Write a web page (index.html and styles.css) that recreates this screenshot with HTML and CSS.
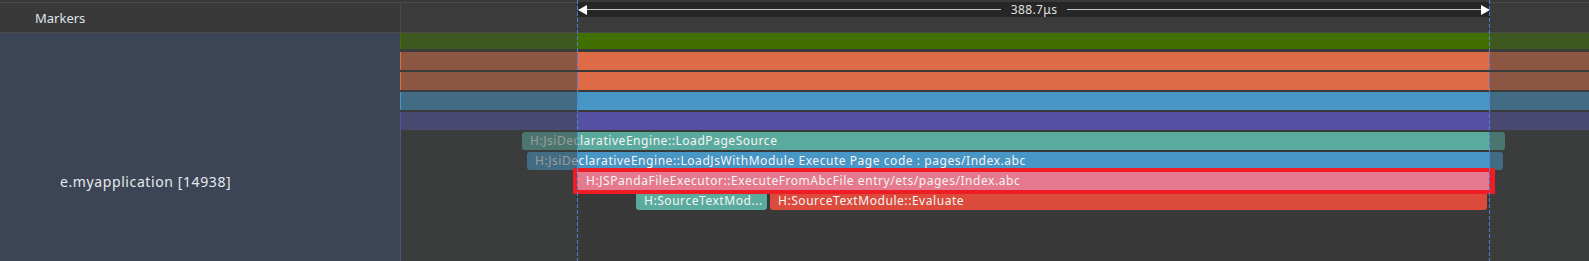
FILE: index.html
```html
<!DOCTYPE html>
<html lang="en">
<head>
  <meta charset="UTF-8">
  <title>Trace - e.myapplication</title>
  <link rel="stylesheet" href="styles.css">
</head>
<body>

  <div class="trace">

    <!-- Left column: row names -->
    <div class="side">
      <div class="side-head"><span>Markers</span></div>
      <div class="side-body"><span>e.myapplication [14938]</span></div>
    </div>

    <!-- Right column: timeline -->
    <div class="timeline">
      <div class="time-head">
        <div class="ruler" style="left: 177px; width: 912px;">
          <span class="arrow arrow-left"></span>
          <span class="rule-line"></span>
          <span class="rule-label">388.7μs</span>
          <span class="rule-line"></span>
          <span class="arrow arrow-right"></span>
        </div>
      </div>

      <div class="tracks">
        <div class="bar bar-green"></div>
        <div class="bar bar-orange"></div>
        <div class="bar bar-orange"></div>
        <div class="bar bar-blue"></div>
        <div class="bar bar-purple"></div>

        <div class="slices">
          <div class="slice teal" style="top: 2px; left: 122px; width: 983px;">H:JsiDeclarativeEngine::LoadPageSource</div>
          <div class="slice blue" style="top: 22px; left: 127px; width: 976px;">H:JsiDeclarativeEngine::LoadJsWithModule Execute Page code : pages/Index.abc</div>
          <div class="slice teal" style="top: 62px; left: 236px; width: 131px;">H:SourceTextMod...</div>
          <div class="slice red" style="top: 62px; left: 370px; width: 717px;">H:SourceTextModule::Evaluate</div>
          <div class="slice pink selected" style="top: 42px; left: 177px; width: 912px;">H:JSPandaFileExecutor::ExecuteFromAbcFile entry/ets/pages/Index.abc</div>
        </div>
      </div>

      <!-- Selection: dim what is outside, dashed edges -->
      <div class="dim" style="left: 1px; width: 176px;"></div>
      <div class="dim" style="left: 1090px; right: 0;"></div>
      <div class="edge" style="left: 177px;"></div>
      <div class="edge" style="left: 1089px;"></div>
    </div>

  </div>

</body>
</html>
```

FILE: styles.css
```css
* {
  box-sizing: border-box;
}

body {
  margin: 0;
  background-color: #393939;
  font-family: "Noto Sans", "Open Sans", sans-serif;
  overflow: hidden;
}

.trace {
  display: flex;
  width: 1589px;
  height: 261px;
}

/* left column */
.side {
  width: 400px;
  display: flex;
  flex-direction: column;
}

.side-head {
  margin-top: 2px;
  height: 31px;
  padding-left: 35px;
  display: flex;
  align-items: center;
  background-color: #393939;
  border-top: 1px solid #4a4a4a;
  border-bottom: 1px solid #4a4a4a;
  color: #dfe3ea;
  font-size: 13px;
}

.side-body {
  flex: 1;
  background-color: #3c4556;
  display: flex;
  align-items: center;
  padding-left: 60px;
  padding-top: 69px;
  color: #e6e8ec;
  font-size: 14px;
  letter-spacing: 0.6px;
}

/* timeline */
.timeline {
  flex: 1;
  position: relative;
}

.time-head {
  position: relative;
  margin-top: 2px;
  height: 31px;
  border-top: 1px solid #4a4a4a;
  border-bottom: 1px solid #4a4a4a;
  border-left: 1px solid #4a4a4a;
  background-color: #3b3b3b;
}

.ruler {
  position: absolute;
  top: -1px;
  height: 15px;
  background-color: #262626;
  display: flex;
  align-items: center;
}

.rule-line {
  flex: 1;
  height: 1px;
  background-color: #c4c4c4;
}

.rule-label {
  padding: 0 10px;
  color: #e0e0e0;
  font-size: 12px;
  line-height: 15px;
  letter-spacing: 0.4px;
}

.arrow {
  width: 0;
  height: 0;
  border-top: 5px solid transparent;
  border-bottom: 5px solid transparent;
}

.arrow-left {
  border-right: 9px solid #ffffff;
}

.arrow-right {
  border-left: 9px solid #ffffff;
}

.tracks {
  display: flex;
  flex-direction: column;
}

.bar {
  height: 18px;
  margin-top: 2px;
}

.bar-green {
  height: 16px;
  margin-top: 0;
  margin-bottom: 1px;
  background-color: #417000;
}

.bar-orange {
  background-color: #dd6b45;
}

.bar-blue {
  background-color: #4896c6;
}

.bar-purple {
  background-color: #5650a5;
}

.slices {
  position: relative;
  height: 131px;
  box-shadow: inset 1px 0 #4c5a75;
}

.slice {
  position: absolute;
  height: 18px;
  padding-left: 8px;
  border-radius: 3px;
  color: #f4f4f4;
  font-size: 12px;
  line-height: 18px;
  letter-spacing: 0.55px;
  white-space: nowrap;
  overflow: hidden;
}

.teal {
  background-color: #5aab9e;
}

.blue {
  background-color: #4896c6;
}

.red {
  background-color: #db4a3b;
}

.pink {
  background-color: #e57a8f;
  border-radius: 0;
  padding-left: 9px;
  overflow: visible;
  z-index: 2;
}

.selected::after {
  content: "";
  position: absolute;
  top: -4px;
  left: -4px;
  right: -6px;
  bottom: -4px;
  border: 4px solid #ee1c25;
  border-right-width: 6px;
}

.dim {
  position: absolute;
  top: 33px;
  bottom: 0;
  z-index: 1;
  background-color: rgba(60, 66, 64, 0.5);
}

.edge {
  position: absolute;
  top: 0;
  bottom: 0;
  width: 1px;
  z-index: 3;
  background-image: repeating-linear-gradient(to bottom, #4f7fd0 0, #4f7fd0 4px, transparent 4px, transparent 6px);
}
```
